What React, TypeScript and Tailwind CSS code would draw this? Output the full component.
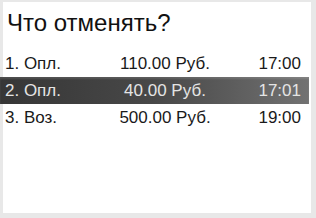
const rows = [
  { n: "1. Опл.", sum: "110.00 Руб.", time: "17:00", active: false },
  { n: "2. Опл.", sum: "40.00 Руб.", time: "17:01", active: true },
  { n: "3. Воз.", sum: "500.00 Руб.", time: "19:00", active: false },
]

export default function App() {
  return (
    <div
      className="w-[316px] h-[218px] bg-[#e8e8e8] pt-[2px] pl-[3px] pr-[5px] pb-[5px]"
      style={{ fontFamily: '"Liberation Sans", Arial, sans-serif' }}
    >
      <div className="h-full bg-white flex flex-col">
        <div className="h-[48px] pt-[7px] pl-[4px] text-[24px] leading-[28px] text-[#111]">
          Что отменять?
        </div>
        {rows.map((r) => (
          <div
            key={r.n}
            className={`flex h-[27px] -ml-[3px] mr-[2px] text-[17px] leading-[27px] ${
              r.active
                ? "bg-gradient-to-r from-[#363636] via-[#484848] to-[#727272] text-[#e4e4e4] shadow-[inset_0_2px_2px_rgba(255,255,255,0.12)]"
                : "text-[#1a1a1a]"
            }`}
          >
            <div className="w-[105px] pl-[5px]">{r.n}</div>
            <div className="flex-1 text-center">{r.sum}</div>
            <div className="w-[84px] pr-[8px] text-right">{r.time}</div>
          </div>
        ))}
      </div>
    </div>
  )
}
